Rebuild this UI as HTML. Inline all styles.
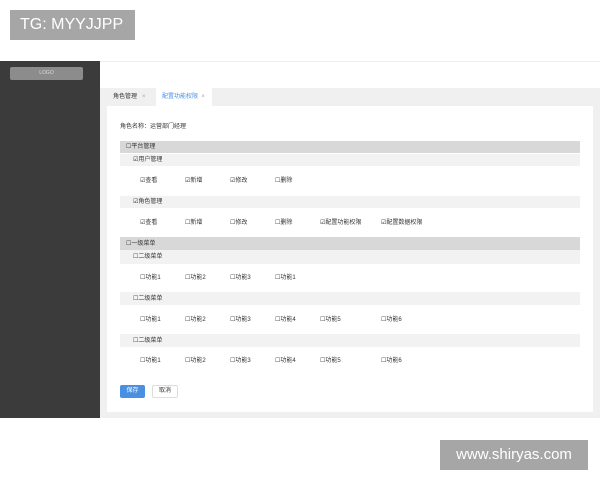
<!DOCTYPE html><html><head><meta charset="utf-8"><style>
*{margin:0;padding:0;box-sizing:border-box}
body{width:600px;height:480px;background:#fff;position:relative;font-family:"Liberation Sans","Noto Sans CJK SC",sans-serif;overflow:hidden;color:#333}
div,span{position:absolute}
.t{font-size:6px;white-space:nowrap;line-height:8px}
.r{left:120px;width:460px}
.g1{background:#d8d8d8}.g2{background:#f2f2f2}
</style></head><body>
<div style="left:10px;top:10px;width:125px;height:30px;background:#a6a6a6;color:#fff;font-size:16px;line-height:30px;padding-left:10px">TG: MYYJJPP</div>
<div style="left:0;top:61px;width:100px;height:357px;background:#3b3b3b"></div>
<div style="left:10px;top:67px;width:73px;height:13px;background:#8c8c8c;border-radius:2px;color:#ddd;font-size:5px;line-height:13px;text-align:center">LOGO</div>
<div style="left:100px;top:61px;width:500px;height:27px;background:#fff;border-top:1px solid #eee"></div>
<div style="left:100px;top:88px;width:500px;height:330px;background:#f0f0f0"></div>
<div class="t" style="left:113px;top:93px">角色管理 &nbsp;&nbsp;<span style="position:static;color:#aaa">×</span></div>
<div style="left:156px;top:88px;width:56px;height:18px;background:#fff"></div>
<div class="t" style="left:162px;top:93px;color:#4a90e2">配置功能权限 &nbsp;<span style="position:static;color:#aaa">×</span></div>
<div style="left:107px;top:106px;width:486px;height:306px;background:#fff"></div>
<div class="t" style="left:120px;top:123px">角色名称：运营部门经理</div>
<div class="r g1" style="top:141px;height:12px"></div><div class="t" style="left:126px;top:143px">☐平台管理</div>
<div class="r g2" style="top:154px;height:12px"></div><div class="t" style="left:133px;top:156px">☑用户管理</div>
<div class="t" style="left:140px;top:177px">☑查看</div><div class="t" style="left:185px;top:177px">☑新增</div><div class="t" style="left:230px;top:177px">☑修改</div><div class="t" style="left:275px;top:177px">☐删除</div>
<div class="r g2" style="top:196px;height:12px"></div><div class="t" style="left:133px;top:198px">☑角色管理</div>
<div class="t" style="left:140px;top:219px">☑查看</div><div class="t" style="left:185px;top:219px">☐新增</div><div class="t" style="left:230px;top:219px">☐修改</div><div class="t" style="left:275px;top:219px">☐删除</div><div class="t" style="left:320px;top:219px">☑配置功能权限</div><div class="t" style="left:381px;top:219px">☑配置数据权限</div>
<div class="r g1" style="top:237px;height:13px"></div><div class="t" style="left:126px;top:240px">☐一级菜单</div>
<div class="r g2" style="top:250px;height:14px"></div><div class="t" style="left:133px;top:253px">☐二级菜单</div>
<div class="t" style="left:140px;top:274px">☐功能1</div><div class="t" style="left:185px;top:274px">☐功能2</div><div class="t" style="left:230px;top:274px">☐功能3</div><div class="t" style="left:275px;top:274px">☐功能1</div>
<div class="r g2" style="top:292px;height:13px"></div><div class="t" style="left:133px;top:295px">☐二级菜单</div>
<div class="t" style="left:140px;top:316px">☐功能1</div><div class="t" style="left:185px;top:316px">☐功能2</div><div class="t" style="left:230px;top:316px">☐功能3</div><div class="t" style="left:275px;top:316px">☐功能4</div><div class="t" style="left:320px;top:316px">☐功能5</div><div class="t" style="left:381px;top:316px">☐功能6</div>
<div class="r g2" style="top:334px;height:13px"></div><div class="t" style="left:133px;top:337px">☐二级菜单</div>
<div class="t" style="left:140px;top:357px">☐功能1</div><div class="t" style="left:185px;top:357px">☐功能2</div><div class="t" style="left:230px;top:357px">☐功能3</div><div class="t" style="left:275px;top:357px">☐功能4</div><div class="t" style="left:320px;top:357px">☐功能5</div><div class="t" style="left:381px;top:357px">☐功能6</div>
<div style="left:120px;top:385px;width:25px;height:13px;background:#4a90e2;border-radius:2px;color:#fff;font-size:6px;line-height:13px;text-align:center">保存</div>
<div style="left:152px;top:385px;width:26px;height:13px;background:#fff;border:1px solid #ddd;border-radius:2px;font-size:6px;line-height:11px;text-align:center">取消</div>
<div style="left:440px;top:440px;width:148px;height:30px;background:#a6a6a6;color:#fff;font-size:15px;line-height:30px;text-align:center">www.shiryas.com</div>
</body></html>
